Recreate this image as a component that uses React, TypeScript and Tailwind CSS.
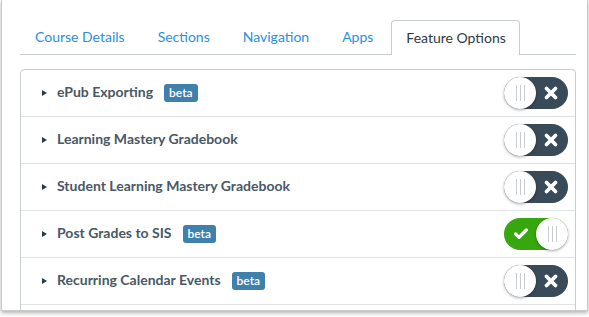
import { Check, X } from "lucide-react";

const tabs = ["Course Details", "Sections", "Navigation", "Apps"];

const features = [
  { name: "ePub Exporting", beta: true, on: false },
  { name: "Learning Mastery Gradebook", beta: false, on: false },
  { name: "Student Learning Mastery Gradebook", beta: false, on: false },
  { name: "Post Grades to SIS", beta: true, on: true },
  { name: "Recurring Calendar Events", beta: true, on: false },
];

function Knob() {
  return (
    <div className="flex h-[32px] w-[32px] shrink-0 items-center justify-center gap-[3px] rounded-full bg-white shadow-[0_1px_3px_rgba(0,0,0,0.35)]">
      <span className="h-[16px] w-px bg-[#c7cdd1]" />
      <span className="h-[16px] w-px bg-[#c7cdd1]" />
      <span className="h-[16px] w-px bg-[#c7cdd1]" />
    </div>
  );
}

function Toggle({ on }: { on: boolean }) {
  if (on) {
    return (
      <div className="flex h-[32px] w-[64px] items-center rounded-full bg-[#36a70f]">
        <div className="flex flex-1 items-center justify-center pl-[2px]">
          <Check className="h-[16px] w-[16px] text-white" strokeWidth={5} />
        </div>
        <Knob />
      </div>
    );
  }
  return (
    <div className="flex h-[32px] w-[64px] items-center rounded-full bg-[#394b58]">
      <Knob />
      <div className="flex flex-1 items-center justify-center pr-[2px]">
        <X className="h-[18px] w-[18px] text-white" strokeWidth={5} />
      </div>
    </div>
  );
}

export default function App() {
  return (
    <div className="h-[317px] w-[589px] bg-white font-['Lato',sans-serif]">
      <div className="ml-[1px] h-[311px] w-[587px] overflow-hidden border-x border-b border-[#c9c9c9] bg-white pl-[18px] pt-[20px] shadow-[0_2px_4px_rgba(0,0,0,0.3)]">
        {/* Tabs */}
        <div className="flex h-[35px] w-[556px] items-stretch gap-[3px] border-b border-[#c7cdd1]">
          {tabs.map((t) => (
            <div key={t} className="flex items-center px-[15px] pb-[2px] text-[14px] text-[#2b8fe0]">
              {t}
            </div>
          ))}
          <div className="-mb-px flex items-center rounded-t-[4px] border border-b-0 border-[#c7cdd1] bg-white pb-[2px] pl-[14px] pr-[13px] text-[14px] text-[#2d3b45]">
            Feature Options
          </div>
        </div>

        {/* Feature list */}
        <div className="mt-[14px] w-[556px] rounded-[4px] border border-[#c7cdd1]">
          {features.map((f) => (
            <div
              key={f.name}
              className="flex h-[47px] items-center border-b border-[#dfe3e6] pl-[21px] pr-[7px]"
            >
              <span className="h-0 w-0 border-y-[3.5px] border-l-[5px] border-y-transparent border-l-[#2d3b45]" />
              <span className="ml-[10px] pb-[3px] text-[14px] font-bold text-[#485866]">{f.name}</span>
              {f.beta && (
                <span className="ml-[11px] rounded-[3px] bg-[#4080ad] px-[5px] pb-[2px] pt-[2px] text-[12px] font-semibold leading-[14px] text-white">
                  beta
                </span>
              )}
              <div className="ml-auto">
                <Toggle on={f.on} />
              </div>
            </div>
          ))}
          <div className="h-[12px]" />
        </div>
      </div>
    </div>
  );
}
